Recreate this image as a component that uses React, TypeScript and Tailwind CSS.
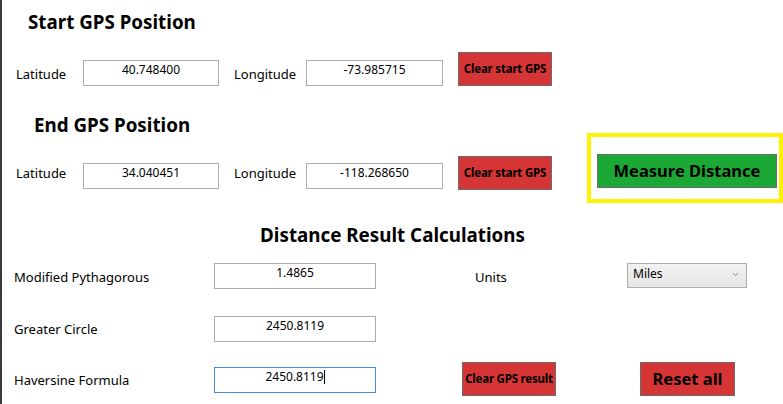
import { ChevronDown } from "lucide-react";

function Box({ value, width, caret = false, focused = false }: { value: string; width: string; caret?: boolean; focused?: boolean }) {
  return (
    <div
      className={`${width} h-[26px] shrink-0 border ${focused ? "border-[#3d8ee0]" : "border-[#acacac]"} bg-white text-center text-[12px] leading-[16px] pt-[1px] text-black`}
    >
      {value}
      {caret && <span className="inline-block w-px h-[14px] bg-black align-[-3px]" />}
    </div>
  );
}

function RedButton({ label, width = "w-[94px]", big = false }: { label: string; width?: string; big?: boolean }) {
  return (
    <button
      className={`${width} h-[34px] shrink-0 bg-[#d63535] border border-[#6c6c6c] flex items-center justify-center font-bold text-black ${big ? "text-[16.5px]" : "text-[11.5px] tracking-[-0.2px]"}`}
    >
      {label}
    </button>
  );
}

export default function App() {
  return (
    <div className="w-[783px] h-[404px] overflow-hidden bg-white border-l-2 border-[#3a3a3a] font-['Noto_Sans',sans-serif] text-black">
      {/* start position */}
      <h1 className="mt-[8px] pl-[26px] text-[18.8px] leading-[28px] font-bold">Start GPS Position</h1>
      <div className="mt-[16px] h-[34px] flex items-start pl-[14px]">
        <span className="w-[67px] mt-[11px] text-[13px] leading-[22px]">Latitude</span>
        <div className="mt-[8px]">
          <Box value="40.748400" width="w-[136px]" />
        </div>
        <span className="ml-[15px] w-[72px] mt-[11px] text-[13px] leading-[22px]">Longitude</span>
        <div className="mt-[8px]">
          <Box value="-73.985715" width="w-[137px]" />
        </div>
        <div className="ml-[15px]">
          <RedButton label="Clear start GPS" />
        </div>
      </div>

      {/* end position + measure */}
      <div className="mt-[25px] flex items-start">
        <div className="w-[585px]">
          <h2 className="pl-[32px] text-[18.8px] leading-[28px] font-bold">End GPS Position</h2>
          <div className="mt-[17px] h-[34px] flex items-start pl-[14px]">
            <span className="w-[67px] mt-[6px] text-[13px] leading-[22px]">Latitude</span>
            <div className="mt-[7px]">
              <Box value="34.040451" width="w-[136px]" />
            </div>
            <span className="ml-[15px] w-[72px] mt-[6px] text-[13px] leading-[22px]">Longitude</span>
            <div className="mt-[7px]">
              <Box value="-118.268650" width="w-[137px]" />
            </div>
            <div className="ml-[15px]">
              <RedButton label="Clear start GPS" />
            </div>
          </div>
        </div>
        <div className="mt-[22px] w-[196px] h-[70px] border-4 border-[#fff200] pl-[6px] pt-[17px]">
          <button className="w-[180px] h-[34px] bg-[#1ca834] border border-[#6c6c6c] text-[16.5px] font-bold text-black flex items-center justify-center">
            Measure Distance
          </button>
        </div>
      </div>

      {/* results */}
      <h2 className="mt-[18px] text-center text-[18.8px] leading-[28px] font-bold">Distance Result Calculations</h2>

      <div className="mt-[14px] flex items-center pl-[12px] h-[25px]">
        <span className="w-[200px] mt-[3px] text-[13px] leading-[25px]">Modified Pythagorous</span>
        <Box value="1.4865" width="w-[162px]" />
        <span className="ml-[99px] w-[152px] mt-[3px] text-[13px] leading-[25px]">Units</span>
        <div className="w-[120px] h-[25px] border border-[#acacac] bg-gradient-to-b from-[#f2f2f2] to-[#e5e5e5] flex items-start justify-between pl-[5px] pr-[6px] text-[12px] leading-[16px] pt-[2px]">
          <span>Miles</span>
          <ChevronDown className="w-[9px] h-[9px] mt-[4px] text-[#606060]" strokeWidth={2} />
        </div>
      </div>

      <div className="mt-[28px] flex items-center pl-[12px] h-[25px]">
        <span className="w-[200px] mt-[2px] text-[13px] leading-[25px]">Greater Circle</span>
        <Box value="2450.8119" width="w-[162px]" />
      </div>

      <div className="mt-[21px] flex items-start pl-[12px] h-[34px]">
        <span className="w-[200px] mt-[6px] text-[13px] leading-[25px]">Haversine Formula</span>
        <div className="mt-[5px]">
          <Box value="2450.8119" width="w-[162px]" caret focused />
        </div>
        <div className="ml-[86px]">
          <RedButton label="Clear GPS result" />
        </div>
        <div className="ml-[84px]">
          <RedButton label="Reset all" width="w-[95px]" big />
        </div>
      </div>
    </div>
  );
}
